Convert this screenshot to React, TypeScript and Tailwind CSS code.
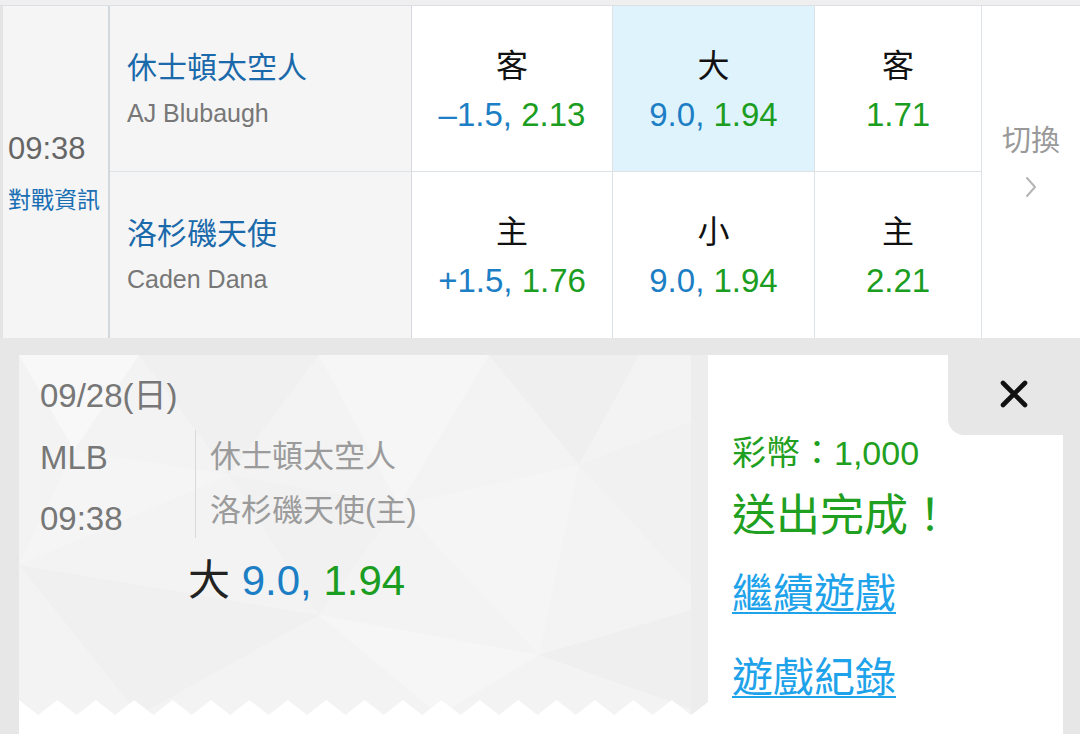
import React from 'react';

// zigzag bottom edge of the ticket background
const TW = 689;
const TH = 360;
const P = 38.4;
const zy = (x: number) => {
  const t = (x % P) / P;
  return TH - 15 * Math.abs(t - 0.5) * 2;
};
const ticketPath = (() => {
  let d = `M0 0H${TW}V${zy(TW).toFixed(1)}`;
  const pts: number[] = [];
  for (let x = Math.floor(TW / (P / 2)) * (P / 2); x > 0; x -= P / 2) pts.push(x);
  pts.forEach(x => {
    d += `L${x.toFixed(1)} ${zy(x).toFixed(1)}`;
  });
  d += `L0 ${zy(0)}Z`;
  return d;
})();

const TicketBg = () => (
  <svg className="absolute left-0 top-0" width={TW} height={TH} viewBox={`0 0 ${TW} ${TH}`}>
    <defs>
      <clipPath id="ticket">
        <path d={ticketPath} />
      </clipPath>
    </defs>
    <g clipPath="url(#ticket)">
      <rect width={TW} height={TH} fill="#f3f3f3" />
      <polygon points="0,0 120,0 55,95" fill="#f8f8f8" />
      <polygon points="120,0 300,0 210,120" fill="#f0f0f0" />
      <polygon points="55,95 210,120 0,210" fill="#f5f5f5" />
      <polygon points="300,0 470,0 380,150" fill="#f6f6f6" />
      <polygon points="210,120 380,150 300,260" fill="#f1f1f1" />
      <polygon points="470,0 620,0 560,110" fill="#efefef" />
      <polygon points="380,150 560,110 520,300" fill="#f5f5f5" />
      <polygon points="560,110 689,60 689,250" fill="#f1f1f1" />
      <polygon points="0,210 300,260 120,360" fill="#f0f0f0" />
      <polygon points="300,260 520,300 420,360" fill="#f6f6f6" />
      <polygon points="520,300 689,250 689,360" fill="#efefef" />
      <polygon points="672,0 689,0 689,360 672,360" fill="#ededed" />
    </g>
  </svg>
);

const OddsCell = ({ label, line, price, hl, top }: any) => (
  <div
    className={`flex flex-col items-center justify-center gap-[11px] pt-[3px] ${top ? 'h-[166px] border-b border-[#dde2e7]' : 'flex-1'} ${hl ? 'bg-[#dff3fd]' : 'bg-white'}`}
  >
    <span className="text-[32px] leading-[38px] text-[#111]">{label}</span>
    <span className="text-[33px] leading-[38px] whitespace-nowrap">
      {line && <span className="text-[#1c7ec4]">{line}, </span>}
      <span className="text-[#1b9d22]">{price}</span>
    </span>
  </div>
);

const TeamCell = ({ name, pitcher, top }: any) => (
  <div className={`flex flex-col justify-center gap-[12px] pl-[17px] ${top ? 'h-[166px] border-b border-[#dde2e7]' : 'flex-1'}`}>
    <span className="text-[30px] leading-[36px] text-[#1a6aab]">{name}</span>
    <span className="text-[25px] leading-[30px] text-[#777]">{pitcher}</span>
  </div>
);

export default function App() {
  return (
    <div className="w-[1080px] h-[734px] overflow-hidden bg-[#e7e7e7] font-['Liberation_Sans','Noto_Sans_CJK_TC',sans-serif]">
      {/* top strip */}
      <div className="h-[6px] bg-[#efefef] border-b border-[#dcdfe3]" />

      {/* odds table */}
      <div className="flex h-[332px]">
        <div className="w-[110px] shrink-0 flex flex-col justify-center gap-[19px] bg-[#f5f5f5] border-l-[3px] border-l-[#e4e4e4] border-r-2 border-r-[#d3d8dd] pl-[5px]">
          <span className="text-[31px] leading-[36px] text-[#666]">09:38</span>
          <span className="text-[23px] leading-[28px] text-[#1a6fb4]">對戰資訊</span>
        </div>
        <div className="w-[302px] shrink-0 flex flex-col bg-[#f5f5f5] border-r border-[#d6dade]">
          <TeamCell top name="休士頓太空人" pitcher="AJ Blubaugh" />
          <TeamCell name="洛杉磯天使" pitcher="Caden Dana" />
        </div>
        <div className="w-[201px] shrink-0 flex flex-col border-r border-[#dde2e7]">
          <OddsCell top label="客" line="–1.5" price="2.13" />
          <OddsCell label="主" line="+1.5" price="1.76" />
        </div>
        <div className="w-[202px] shrink-0 flex flex-col border-r border-[#dde2e7]">
          <OddsCell top hl label="大" line="9.0" price="1.94" />
          <OddsCell label="小" line="9.0" price="1.94" />
        </div>
        <div className="w-[167px] shrink-0 flex flex-col border-r border-[#dde2e7]">
          <OddsCell top label="客" price="1.71" />
          <OddsCell label="主" price="2.21" />
        </div>
        <div className="flex-1 flex flex-col items-center justify-center gap-[18px] pb-[22px] bg-white">
          <span className="text-[29px] leading-[34px] text-[#999]">切換</span>
          <svg width="14" height="22" viewBox="0 0 14 22" fill="none">
            <polyline points="3,2 11,11 3,20" stroke="#b5b5b5" strokeWidth="2" strokeLinecap="round" strokeLinejoin="round" />
          </svg>
        </div>
      </div>

      {/* bet receipt */}
      <div className="mt-[17px] ml-[19px] w-[1044px] h-[379px] flex">
        <div className="relative w-[689px] shrink-0 h-full bg-white">
          <TicketBg />
          <div className="relative pl-[21px] pt-[21px]">
            <div className="text-[33px] leading-[40px] text-[#777]">09/28(日)</div>
            <div className="flex mt-[14px]">
              <div className="w-[155px] flex flex-col pt-[8px] gap-[21px] text-[33px] leading-[40px] text-[#777]">
                <span>MLB</span>
                <span>09:38</span>
              </div>
              <div className="border-l border-[#d9d9d9] pl-[14px] text-[31px] leading-[55px] text-[#9b9b9b] h-[108px]">
                <div className="-mt-[1px]">休士頓太空人</div>
                <div className="-mt-[1px]">洛杉磯天使(主)</div>
              </div>
            </div>
            <div className="mt-[17px] ml-[148px] text-[42px] leading-[50px] whitespace-nowrap">
              <span className="text-[#222]">大 </span>
              <span className="text-[#1c7ec4]">9.0, </span>
              <span className="text-[#1b9d22]">1.94</span>
            </div>
          </div>
        </div>

        <div className="relative flex-1 h-full bg-white pl-[24px] pt-[78px]">
          <div className="absolute top-0 right-0 w-[115px] h-[80px] bg-[#e7e7e7] rounded-bl-[16px] flex items-center justify-center pl-[16px] pb-[2px]">
            <svg width="28" height="28" viewBox="0 0 28 28">
              <path d="M3 3L25 25M25 3L3 25" stroke="#111" strokeWidth="4.6" strokeLinecap="round" />
            </svg>
          </div>
          <div className="text-[34px] leading-[40px] text-[#1fa020] whitespace-nowrap">彩幣：1,000</div>
          <div className="mt-[17px] text-[44px] leading-[52px] text-[#1fa020] whitespace-nowrap">送出完成！</div>
          <div className="mt-[28px] text-[41px] leading-[48px] text-[#1ea2ea] underline underline-offset-[4px] decoration-2 whitespace-nowrap">繼續遊戲</div>
          <div className="mt-[36px] text-[41px] leading-[48px] text-[#1ea2ea] underline underline-offset-[4px] decoration-2 whitespace-nowrap">遊戲紀錄</div>
        </div>
      </div>
    </div>
  );
}
